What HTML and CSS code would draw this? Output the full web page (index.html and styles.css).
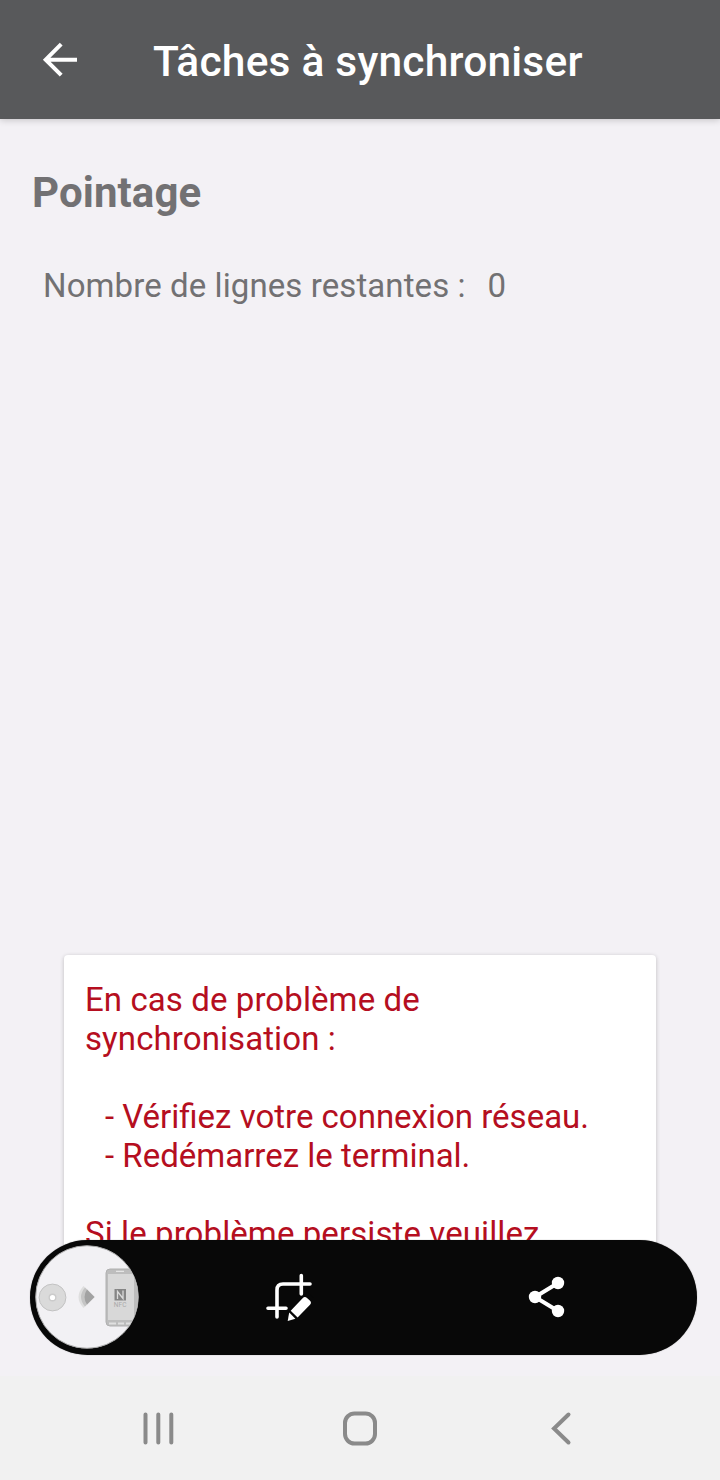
FILE: index.html
```html
<!DOCTYPE html>
<html lang="fr">

<head>
	<title>Tâches à synchroniser</title>
	<meta charset="UTF-8">
	<link rel="stylesheet" href="styles.css">
</head>

<body>
	<header class="toolbar">
		<svg class="back" width="36" height="36" viewBox="0 0 36 36">
			<path d="M35 17.700H4M19.200 2.200L3.700 17.700L19.200 33.200" fill="none" stroke="#fff" stroke-width="4" />
		</svg>
		<h1>Tâches à synchroniser</h1>
	</header>

	<main class="content">
		<section class="pointage">
			<h2>Pointage</h2>
			<p class="count"><span>Nombre de lignes restantes :</span><span>0</span></p>
		</section>
		<section class="card">
			<p>En cas de problème de synchronisation :</p>
			<ul>
				<li>- Vérifiez votre connexion réseau.</li>
				<li>- Redémarrez le terminal.</li>
			</ul>
			<p>Si le problème persiste veuillez</p>
		</section>
	</main>

	<nav class="navbar">
		<svg width="34" height="36" viewBox="0 0 34 36">
			<path d="M4.5 4.500V32.500M17.3 4.500V32.500M30.3 4.500V32.500" fill="none" stroke="#8a8a8a" stroke-width="4" stroke-linecap="round" />
		</svg>
		<svg class="home" width="36" height="36" viewBox="0 0 36 36">
			<rect x="3" y="3.500" width="30" height="30" rx="9.5" fill="none" stroke="#8a8a8a" stroke-width="4" />
		</svg>
		<svg width="24" height="36" viewBox="0 0 24 36">
			<path d="M18.500 4.500L4 18.500L18.500 32.500" fill="none" stroke="#8a8a8a" stroke-width="4" stroke-linecap="round" />
		</svg>
	</nav>

	<!-- barre de capture -->
	<div class="capture">
		<svg class="thumb" width="104" height="104" viewBox="0 0 104 104">
			<defs>
				<clipPath id="rond"><circle cx="52" cy="52" r="51" /></clipPath>
			</defs>
			<circle cx="52" cy="52" r="51.3" fill="#f2f1f4" stroke="#aaa" stroke-width="1" />
			<g clip-path="url(#rond)">
				<circle cx="17.5" cy="52.5" r="13.4" fill="#dadada" stroke="#c2c2c2" />
				<circle cx="17.5" cy="52.5" r="4" fill="#cbcbcb" />
				<circle cx="17.5" cy="52.5" r="2.6" fill="#fff" />
				<path d="M59.500 52L48.500 41Q38.500 52 48.500 63Z" fill="#dedede" />
				<path d="M59.500 52L50 42.500Q42 52 50 61.500Z" fill="#c4c4c4" />
				<path d="M59.500 52L52 44.500Q47 52 52 59.500Z" fill="#a2a2a2" />
				<rect x="71" y="24" width="36" height="57" rx="4" fill="#bdbdbd" stroke="#b0b0b0" />
				<rect x="73" y="29" width="26" height="46" fill="#d8d8d8" />
				<path d="M81 26.3H89" stroke="#e5e5e5" stroke-width="1.3" />
				<path d="M74 78.5H81M83 78.5H89M91 78.5H97" stroke="#e0e0e0" stroke-width="2" />
				<rect x="79.500" y="44" width="11.500" height="11.500" fill="#858585" />
				<path d="M82.500 54V46.500L88 53.500V45.500" fill="none" stroke="#dadada" stroke-width="1.300" />
				<text x="78.800" y="62" class="nfc">NFC</text>
			</g>
		</svg>
		<svg class="crop" width="50" height="50" viewBox="0 0 50 50">
			<g fill="none" stroke="#fff" stroke-width="3.6" stroke-linecap="round">
				<path d="M46 12H19Q13 12 13 18V45" />
				<path d="M4 36.300H22M37.300 3.500V22" />
			</g>
			<path d="M20 45L43 20L50 26V50H20Z" fill="#080808" />
			<path d="M26.700 38.700L38.600 26.200Q40.800 24 43 26L45.800 28.500Q48 30.600 46 32.800L33.600 45.400Z" fill="#fff" />
			<path d="M25.200 40.500L31.400 46.800L23.700 49Z" fill="#fff" />
		</svg>
		<svg class="share" width="38" height="42" viewBox="0 0 38 42">
			<path d="M30 7L7 21L30 35" fill="none" stroke="#fff" stroke-width="4" />
			<g fill="#fff">
				<circle cx="30" cy="7" r="6.200" />
				<circle cx="7" cy="21" r="6.200" />
				<circle cx="30" cy="35" r="6.200" />
			</g>
		</svg>
	</div>
</body>

</html>
```
FILE: styles.css
```css
* {
	box-sizing: border-box;
	margin: 0;
	padding: 0;
}

body {
	position: relative;
	display: flex;
	flex-direction: column;
	width: 720px;
	height: 1480px;
	overflow: hidden;
	background: #f3f1f5;
	font-family: Roboto, "Liberation Sans", sans-serif;
	font-size: 33px;
	line-height: 39px;
	letter-spacing: 0.09px;
	color: #727173;
}

svg {
	display: block;
}

.toolbar {
	display: flex;
	align-items: center;
	gap: 75px;
	height: 119px;
	padding-left: 42px;
	background: #58595b;
	box-shadow: 0 1px 7px rgba(0, 0, 0, 0.2);
}

.toolbar h1 {
	padding-top: 4px;
	font-size: 42.5px;
	font-weight: 500;
	line-height: 50px;
	letter-spacing: 0.2px;
	color: #fff;
	white-space: nowrap;
}

.content {
	flex: 1;
	display: flex;
	flex-direction: column;
	justify-content: space-between;
	padding: 49px 64px 96px;
}

.pointage {
	margin-left: -32px;
}

.pointage h2 {
	font-size: 42px;
	font-weight: 700;
	line-height: 50px;
}

.count {
	display: flex;
	gap: 22px;
	padding: 48px 0 0 11px;
}

.card {
	height: 325px;
	padding: 25px 21px 0;
	overflow: hidden;
	background: #fff;
	border-radius: 4px;
	box-shadow: 0 1px 4px rgba(0, 0, 0, 0.22);
	color: #b50e20;
}

.card ul {
	list-style: none;
	padding: 39px 0 39px 20px;
}

/* pas d'espacement ici, sinon la ligature "fi" saute */
.card li {
	letter-spacing: normal;
}

.navbar {
	display: flex;
	justify-content: space-between;
	align-items: center;
	height: 104px;
	padding: 0 146px 0 141px;
	background: #f1f1f1;
}

.home {
	margin-right: 6px;
}

.capture {
	position: absolute;
	left: 30px;
	top: 1240px;
	display: flex;
	align-items: center;
	width: 667px;
	height: 115px;
	padding: 0 0 1px 5px;
	border-radius: 58px;
	background: #080808;
	box-shadow: 0 0 1px #777;
}

.crop {
	margin-left: 125px;
}

.share {
	margin-left: 214px;
}

.nfc {
	font-size: 6.5px;
	fill: #aaa;
}
```
